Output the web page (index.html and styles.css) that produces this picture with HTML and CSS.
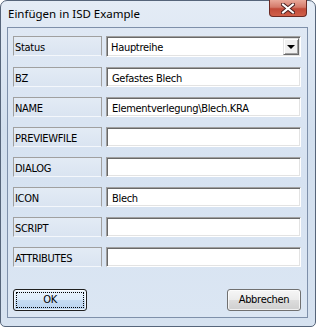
FILE: index.html
```html
<!DOCTYPE html>
<html>
<head>
  <title>Einfügen in ISD Example</title>
  <meta charset="utf-8">
  <link rel="stylesheet" href="styles.css">
</head>
<body>

  <div class="window">
    <div class="titlebar">
      <span class="title">Einfügen in ISD Example</span>
      <div class="close">
        <svg width="14" height="11" viewBox="0 0 14 11">
          <path d="M2 1.5 L12 9.5 M12 1.5 L2 9.5" stroke="#4a2020" stroke-width="4" stroke-linecap="square"/>
          <path d="M2 1.5 L12 9.5 M12 1.5 L2 9.5" stroke="#ffffff" stroke-width="2" stroke-linecap="square"/>
        </svg>
      </div>
    </div>

    <div class="client">
      <div class="form">
        <div class="label">Status</div>
        <div class="field select">
          <span>Hauptreihe</span>
          <div class="drop"><span class="arrow"></span></div>
        </div>

        <div class="label">BZ</div>
        <div class="field">Gefastes Blech</div>

        <div class="label">NAME</div>
        <div class="field">Elementverlegung\Blech.KRA</div>

        <div class="label">PREVIEWFILE</div>
        <div class="field"></div>

        <div class="label">DIALOG</div>
        <div class="field"></div>

        <div class="label">ICON</div>
        <div class="field">Blech</div>

        <div class="label">SCRIPT</div>
        <div class="field"></div>

        <div class="label">ATTRIBUTES</div>
        <div class="field"></div>
      </div>

      <div class="buttons">
        <div class="btn default"><span class="focus">OK</span></div>
        <div class="btn">Abbrechen</div>
      </div>
    </div>
  </div>

</body>
</html>
```

FILE: styles.css
```css
body {
  margin: 0;
  background: #ffffff;
  font-family: "DejaVu Sans Condensed", "DejaVu Sans", sans-serif;
  font-size: 11px;
  letter-spacing: -0.3px;
  color: #000;
}
.window {
  width: 316px;
  height: 327px;
  box-sizing: border-box;
  border: 1px solid #56657a;
  border-radius: 7px 7px 5px 5px;
  background: linear-gradient(#e4ecf6, #d2dfee 40%, #d6e2f0);
  padding: 0 7px 8px 6px;
  display: flex;
  flex-direction: column;
}
.titlebar {
  height: 26px;
  display: flex;
  align-items: flex-start;
  justify-content: space-between;
}
.title {
  font-family: "Noto Sans", sans-serif;
  font-size: 11.5px;
  letter-spacing: 0;
  margin-top: 5px;
  margin-left: 1px;
  color: #000;
}
.close {
  width: 38px;
  height: 17px;
  margin-top: -1px;
  margin-right: 1px;
  box-sizing: border-box;
  border: 1px solid #6b2a24;
  border-top: none;
  border-radius: 0 0 4px 4px;
  background: linear-gradient(#e9a99a, #d47a6a 45%, #c14a38 55%, #d0604a);
  display: flex;
  align-items: center;
  justify-content: center;
}
.client {
  flex: 1;
  border: 1px solid #7e90aa;
  background: linear-gradient(#dfe8f4, #d6e2f1 50%, #dbe6f3);
  padding: 8px 6px 6px 5px;
  display: flex;
  flex-direction: column;
  justify-content: space-between;
}
.form {
  display: grid;
  grid-template-columns: 89px 195px;
  column-gap: 4px;
  row-gap: 10px;
}
.label {
  height: 20px;
  box-sizing: border-box;
  border: 1px solid #a0a0a0;
  border-bottom-color: #f4f7fb;
  background: linear-gradient(#e3ebf5, #dae4f1);
  padding: 4px 0 0 1px;
  line-height: 13px;
}
.field {
  height: 20px;
  box-sizing: border-box;
  background: #fff;
  border: 1px solid;
  border-color: #a0a0a0 #ffffff #ffffff #a0a0a0;
  box-shadow: inset 1px 1px #696969, inset -1px -1px #e3e3e3;
  padding: 4px 0 0 5px;
  line-height: 13px;
}
.select {
  height: 21px;
  display: flex;
  justify-content: space-between;
  padding: 0 1px 0 0;
}
.select span {
  padding: 4px 0 0 4px;
}
.drop {
  width: 16px;
  height: 17px;
  margin-top: 1px;
  box-sizing: border-box;
  background: #f0f0f0;
  border: 1px solid;
  border-color: #e3e3e3 #696969 #696969 #e3e3e3;
  box-shadow: inset 1px 1px #fff, inset -1px -1px #a0a0a0;
  display: flex;
  align-items: center;
  justify-content: center;
}
.select .arrow {
  padding: 0;
  width: 0;
  height: 0;
  border-left: 4px solid transparent;
  border-right: 4px solid transparent;
  border-top: 4px solid #000;
  margin-top: 1px;
}
.buttons {
  display: flex;
  justify-content: space-between;
}
.btn {
  width: 74px;
  height: 22px;
  box-sizing: border-box;
  border: 1px solid #707070;
  border-radius: 3px;
  background: linear-gradient(#f6f6f6, #ebebeb 50%, #dddddd 51%, #cfcfcf);
  box-shadow: inset 0 0 0 1px rgba(255,255,255,0.7);
  text-align: center;
  line-height: 20px;
}
.btn.default {
  border-color: #202020;
  background: linear-gradient(#e9f3fc, #dcebfa 50%, #c6dcf3 51%, #b9d3ef);
  padding: 2px;
}
.btn .focus {
  display: block;
  height: 100%;
  box-sizing: border-box;
  border: 1px dotted #000;
  line-height: 14px;
}
```
